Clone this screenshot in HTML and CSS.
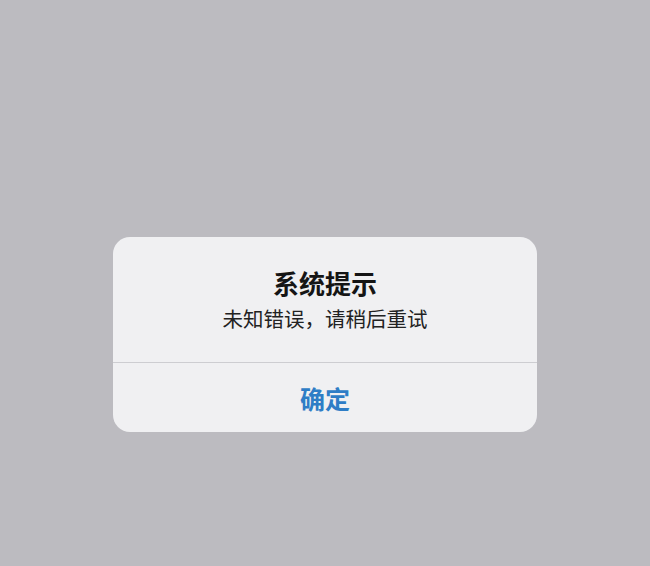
FILE: index.html
```html
<!DOCTYPE html>
<html lang="zh-CN">
<head>
  <meta charset="UTF-8" />
  <meta name="viewport" content="width=device-width, initial-scale=1.0"/>
  <title>系统提示</title>
  <link rel="stylesheet" href="styles.css">
</head>
<body>
  <div class="screen">
    <div class="alert">
      <div class="alert-body">
        <h1 class="alert-title">系统提示</h1>
        <p class="alert-message">未知错误，请稍后重试</p>
      </div>
      <button type="button" class="alert-button">确定</button>
    </div>
  </div>
</body>
</html>
```

FILE: styles.css
```css
html, body {
  margin: 0;
  padding: 0;
  height: 100%;
}
body {
  font-family: "Noto Sans CJK SC", "Noto Sans", sans-serif;
  background-color: #bcbbc0;
  color: #111;
}
.screen {
  display: flex;
  justify-content: center;
  padding-top: 237px;
}
.alert {
  width: 424px;
  background-color: #f0f0f2;
  border-radius: 17px;
  overflow: hidden;
}
.alert-body {
  padding: 29px 20px 30px;
  text-align: center;
  border-bottom: 1px solid #cdcdd1;
}
.alert-title {
  margin: 0;
  font-size: 26px;
  line-height: 34px;
  font-weight: 700;
  color: #151515;
}
.alert-message {
  margin: 4px 0 0;
  font-size: 20.5px;
  line-height: 28px;
  color: #222;
}
.alert-button {
  display: block;
  width: 100%;
  height: 69px;
  padding: 0;
  border: none;
  background: none;
  font-family: inherit;
  font-size: 25px;
  font-weight: 700;
  color: #2e7dc6;
  cursor: pointer;
}
```
